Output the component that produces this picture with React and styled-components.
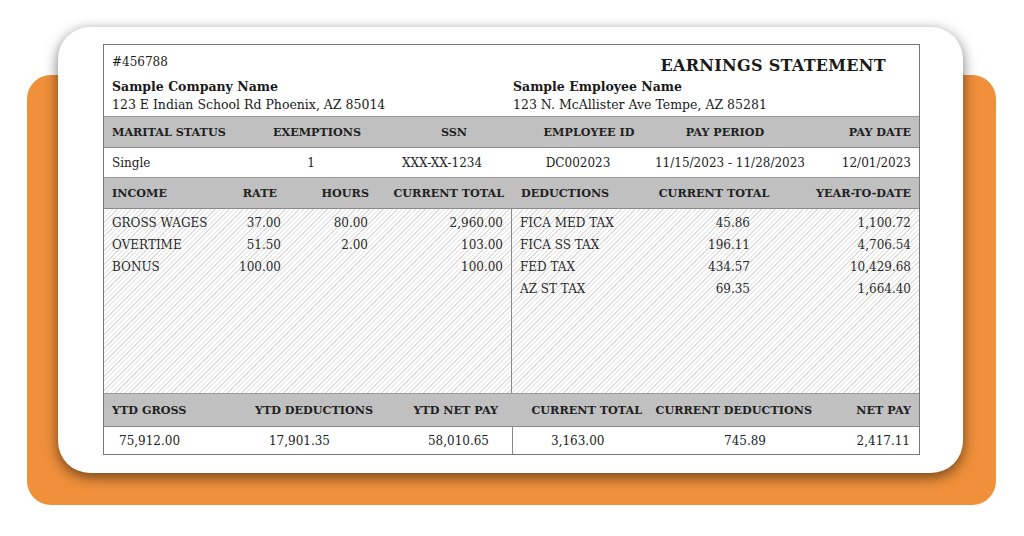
import React from 'react';
import styled, { createGlobalStyle } from 'styled-components';

const GlobalStyle = createGlobalStyle`
  body {
    margin: 0;
    background: #ffffff;
    font-family: "DejaVu Serif", "Liberation Serif", serif;
    color: #1a1a1a;
  }
`;

const Stage = styled.div`
  display: grid;
  width: 1024px;
  height: 536px;
  overflow: hidden;
`;

const Backdrop = styled.div`
  grid-area: 1 / 1;
  margin: 75px 28px 31px 27px;
  background: #f0903a;
  border-radius: 24px;
`;

const Card = styled.div`
  grid-area: 1 / 1;
  margin: 27px 61px 63px 58px;
  background: #ffffff;
  border-radius: 32px;
  box-shadow: 0 4px 14px rgba(0, 0, 0, 0.55);
  padding: 17px 43px 18px 45px;
`;

const Statement = styled.div`
  border: 1px solid #777;
  display: flex;
  flex-direction: column;
  height: 100%;
  box-sizing: border-box;
`;

const Head = styled.div`
  height: 71px;
  display: grid;
  grid-template-columns: 401px 1fr;
  padding: 8px 33px 0 8px;
  box-sizing: border-box;
`;

const HeadCol = styled.div`
  display: flex;
  flex-direction: column;
`;

const DocNo = styled.div`
  font-size: 12px;
  line-height: 18px;
  height: 25px;
`;

const Title = styled.div`
  font-size: 16px;
  font-weight: bold;
  text-align: right;
  line-height: 24px;
  height: 25px;
  margin-top: 1px;
  margin-bottom: -1px;
  letter-spacing: 0.3px;
`;

const Name = styled.div`
  font-size: 12.5px;
  font-weight: bold;
  line-height: 18px;
`;

const Address = styled.div`
  font-size: 12.5px;
  line-height: 18px;
`;

const GrayRow = styled.div`
  display: grid;
  grid-template-columns: ${(p) => p.$cols};
  align-items: center;
  height: ${(p) => p.$h || 30}px;
  background: #c0c0c0;
  border-top: 1px solid #999;
  border-bottom: 1px solid #8a8a8a;
  padding: 0 8px;
  font-size: 11.2px;
  font-weight: bold;
  color: #222;
`;

const DataRow = styled.div`
  display: grid;
  grid-template-columns: ${(p) => p.$cols};
  align-items: center;
  height: ${(p) => p.$h || 29}px;
  padding: 0 8px;
  font-size: 12px;
  color: #222;
`;

const Cell = styled.div`
  white-space: nowrap;
  align-self: stretch;
  display: flex;
  align-items: center;
  justify-content: ${(p) =>
    p.$align === 'right' ? 'flex-end' : p.$align === 'center' ? 'center' : 'flex-start'};
  padding-left: ${(p) => p.$pl || 0}px;
  padding-right: ${(p) => p.$pr || 0}px;
  border-left: ${(p) => (p.$divider ? '1px solid #888' : 'none')};
`;

const Body = styled.div`
  flex: 1;
  display: grid;
  grid-template-columns: 407px 1fr;
  background: repeating-linear-gradient(
    135deg,
    #ffffff 0px,
    #ffffff 2.4px,
    #dedede 2.4px,
    #dedede 3.3px
  );
`;

const Pane = styled.div`
  padding: 3px 8px 0 8px;
  border-left: ${(p) => (p.$divider ? '1px solid #888' : 'none')};
`;

const Line = styled.div`
  display: grid;
  grid-template-columns: ${(p) => p.$cols};
  height: 22px;
  align-items: center;
  font-size: 12px;
  color: #2a2a2a;
`;

const Num = styled.span`
  text-align: right;
`;

const infoHeadCols = '134px 142px 132px 138px 134px 1fr';
const infoDataCols = '134px 130px 132px 140px 164px 1fr';
const incomeCols = '89px 76px 92px 135px 137px 146px 1fr';
const sumHeadCols = '89px 172px 125px 144px 170px 1fr';
const sumDataCols = '119px 142px 139px 169px 131px 1fr';

const income = [
  ['GROSS WAGES', '37.00', '80.00', '2,960.00'],
  ['OVERTIME', '51.50', '2.00', '103.00'],
  ['BONUS', '100.00', '', '100.00'],
];

const deductions = [
  ['FICA MED TAX', '45.86', '1,100.72'],
  ['FICA SS TAX', '196.11', '4,706.54'],
  ['FED TAX', '434.57', '10,429.68'],
  ['AZ ST TAX', '69.35', '1,664.40'],
];

const App = () => {
  return (
    <>
      <GlobalStyle />
      <Stage>
        <Backdrop />
        <Card>
          <Statement>
            <Head>
              <HeadCol>
                <DocNo>#456788</DocNo>
                <Name>Sample Company Name</Name>
                <Address>123 E Indian School Rd Phoenix, AZ 85014</Address>
              </HeadCol>
              <HeadCol>
                <Title>EARNINGS STATEMENT</Title>
                <Name>Sample Employee Name</Name>
                <Address>123 N. McAllister Ave Tempe, AZ 85281</Address>
              </HeadCol>
            </Head>

            <GrayRow $cols={infoHeadCols}>
              <Cell>MARITAL STATUS</Cell>
              <Cell $align="center">EXEMPTIONS</Cell>
              <Cell $align="center">SSN</Cell>
              <Cell $align="center">EMPLOYEE ID</Cell>
              <Cell $align="center">PAY PERIOD</Cell>
              <Cell $align="right">PAY DATE</Cell>
            </GrayRow>
            <DataRow $cols={infoDataCols}>
              <Cell>Single</Cell>
              <Cell $align="center">1</Cell>
              <Cell $align="center">XXX-XX-1234</Cell>
              <Cell $align="center">DC002023</Cell>
              <Cell $align="center">11/15/2023 - 11/28/2023</Cell>
              <Cell $align="right">12/01/2023</Cell>
            </DataRow>

            <GrayRow $cols={incomeCols}>
              <Cell>INCOME</Cell>
              <Cell $align="right">RATE</Cell>
              <Cell $align="right">HOURS</Cell>
              <Cell $align="right">CURRENT TOTAL</Cell>
              <Cell $pl={17}>DEDUCTIONS</Cell>
              <Cell $align="center">CURRENT TOTAL</Cell>
              <Cell $align="right">YEAR-TO-DATE</Cell>
            </GrayRow>

            <Body>
              <Pane>
                {income.map((r) => (
                  <Line key={r[0]} $cols="126px 43px 87px 1fr">
                    <span>{r[0]}</span>
                    <Num>{r[1]}</Num>
                    <Num>{r[2]}</Num>
                    <Num>{r[3]}</Num>
                  </Line>
                ))}
              </Pane>
              <Pane $divider>
                {deductions.map((r) => (
                  <Line key={r[0]} $cols="120px 110px 1fr">
                    <span>{r[0]}</span>
                    <Num>{r[1]}</Num>
                    <Num>{r[2]}</Num>
                  </Line>
                ))}
              </Pane>
            </Body>

            <GrayRow $cols={sumHeadCols} $h={32}>
              <Cell>YTD GROSS</Cell>
              <Cell $align="right">YTD DEDUCTIONS</Cell>
              <Cell $align="right">YTD NET PAY</Cell>
              <Cell $align="right">CURRENT TOTAL</Cell>
              <Cell $align="right">CURRENT DEDUCTIONS</Cell>
              <Cell $align="right">NET PAY</Cell>
            </GrayRow>
            <DataRow $cols={sumDataCols} $h={27}>
              <Cell $pl={7}>75,912.00</Cell>
              <Cell $align="right" $pr={43}>17,901.35</Cell>
              <Cell $align="right" $pr={23}>58,010.65</Cell>
              <Cell $divider $pl={38}>3,163.00</Cell>
              <Cell $align="right" $pr={46}>745.89</Cell>
              <Cell $align="right" $pr={1}>2,417.11</Cell>
            </DataRow>
          </Statement>
        </Card>
      </Stage>
    </>
  );
};

export default App;
